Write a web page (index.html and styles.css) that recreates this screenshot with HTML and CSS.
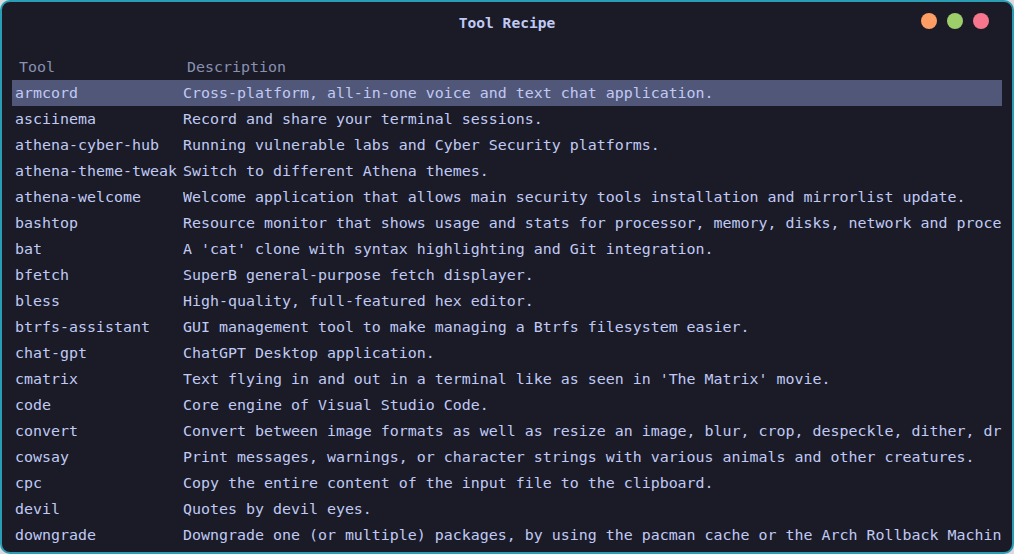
FILE: index.html
```html
<!DOCTYPE html>
<html>
<head>
<meta charset="utf-8">
<link rel="stylesheet" href="styles.css">
</head>
<body>
<div class="window">
  <div class="titlebar">
    <div class="title">Tool Recipe</div>
    <div class="dots">
      <span class="dot orange"></span>
      <span class="dot green"></span>
      <span class="dot red"></span>
    </div>
  </div>
  <div class="table">
    <div class="row head"><div class="c1">Tool</div><div class="c2">Description</div></div>
    <div class="row sel"><div class="c1">armcord</div><div class="c2">Cross-platform, all-in-one voice and text chat application.</div></div>
    <div class="row"><div class="c1">asciinema</div><div class="c2">Record and share your terminal sessions.</div></div>
    <div class="row"><div class="c1">athena-cyber-hub</div><div class="c2">Running vulnerable labs and Cyber Security platforms.</div></div>
    <div class="row"><div class="c1">athena-theme-tweak</div><div class="c2">Switch to different Athena themes.</div></div>
    <div class="row"><div class="c1">athena-welcome</div><div class="c2">Welcome application that allows main security tools installation and mirrorlist update.</div></div>
    <div class="row"><div class="c1">bashtop</div><div class="c2">Resource monitor that shows usage and stats for processor, memory, disks, network and proce</div></div>
    <div class="row"><div class="c1">bat</div><div class="c2">A 'cat' clone with syntax highlighting and Git integration.</div></div>
    <div class="row"><div class="c1">bfetch</div><div class="c2">SuperB general-purpose fetch displayer.</div></div>
    <div class="row"><div class="c1">bless</div><div class="c2">High-quality, full-featured hex editor.</div></div>
    <div class="row"><div class="c1">btrfs-assistant</div><div class="c2">GUI management tool to make managing a Btrfs filesystem easier.</div></div>
    <div class="row"><div class="c1">chat-gpt</div><div class="c2">ChatGPT Desktop application.</div></div>
    <div class="row"><div class="c1">cmatrix</div><div class="c2">Text flying in and out in a terminal like as seen in 'The Matrix' movie.</div></div>
    <div class="row"><div class="c1">code</div><div class="c2">Core engine of Visual Studio Code.</div></div>
    <div class="row"><div class="c1">convert</div><div class="c2">Convert between image formats as well as resize an image, blur, crop, despeckle, dither, dr</div></div>
    <div class="row"><div class="c1">cowsay</div><div class="c2">Print messages, warnings, or character strings with various animals and other creatures.</div></div>
    <div class="row"><div class="c1">cpc</div><div class="c2">Copy the entire content of the input file to the clipboard.</div></div>
    <div class="row"><div class="c1">devil</div><div class="c2">Quotes by devil eyes.</div></div>
    <div class="row"><div class="c1">downgrade</div><div class="c2">Downgrade one (or multiple) packages, by using the pacman cache or the Arch Rollback Machin</div></div>
  </div>
</div>
</body>
</html>
```
FILE: styles.css
```css
html, body {
  margin: 0;
  padding: 0;
  background: #d9dbde;
}
body {
  width: 1014px;
  height: 554px;
  overflow: hidden;
  font-family: "DejaVu Sans Mono", "Liberation Mono", monospace;
}
.window {
  box-sizing: border-box;
  width: 1014px;
  height: 554px;
  background: #1a1b26;
  border: 2px solid #2a9cb3;
  border-radius: 10px;
  overflow: hidden;
  display: flex;
  flex-direction: column;
}
.titlebar {
  height: 40px;
  flex: none;
  position: relative;
  display: flex;
  align-items: center;
  justify-content: center;
}
.title {
  color: #c0caf5;
  font-weight: bold;
  font-size: 14.6px;
}
.dots {
  position: absolute;
  right: 23px;
  top: 11px;
  display: flex;
  gap: 10px;
}
.dot {
  width: 16px;
  height: 16px;
  border-radius: 50%;
  display: block;
}
.orange { background: #ff9e64; }
.green { background: #9ece6a; }
.red { background: #f7768e; }
.table {
  margin: 12px 10px 0 10px;
  font-size: 14.94px;
  color: #c0caf5;
}
.row {
  display: grid;
  grid-template-columns: 162px 1fr;
  column-gap: 6px;
  height: 26px;
  line-height: 26px;
  padding-left: 3px;
  white-space: nowrap;
}
.row > div {
  overflow: hidden;
}
.row.head {
  padding-left: 7px;
  color: #8990b3;
}
.row.sel {
  background: #515778;
}
```
